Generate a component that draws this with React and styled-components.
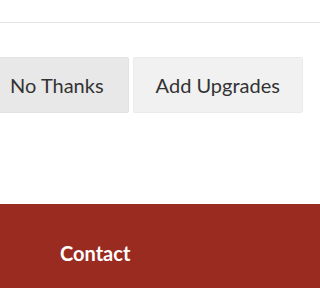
import React from 'react';
import styled, { createGlobalStyle } from 'styled-components';

const GlobalStyle = createGlobalStyle`
  html, body {
    margin: 0;
    padding: 0;
    background: #fff;
    overflow: hidden;
  }
  body {
    font-family: Lato, "Open Sans", sans-serif;
  }
`;

const Page = styled.div`
  width: 100%;
  min-width: 288px;
  height: 100vh;
  min-height: 288px;
  overflow: hidden;
  display: flex;
  flex-direction: column;
`;

const TopRule = styled.div`
  flex: none;
  height: 22px;
  border-bottom: 1px solid #e4e4e4;
`;

const ButtonRow = styled.div`
  width: 288px;
  display: flex;
  justify-content: center;
  gap: 4px;
  margin-top: 34px;
`;

const ActionButton = styled.button`
  flex: none;
  height: 56px;
  padding: 0 ${p => p.$pad}px;
  border: 1px solid ${p => (p.$muted ? '#e2e2e2' : '#ebebeb')};
  border-radius: 2px;
  background: ${p => (p.$muted ? '#e8e8e8' : '#f1f1f1')};
  color: #333;
  font-family: Lato, sans-serif;
  font-size: 20px;
  line-height: 24px;
  white-space: nowrap;
  cursor: pointer;
`;

const Footer = styled.footer`
  margin-top: 91px;
  flex: 1;
  background: #9a2b20;
  padding: 37px 0 0 60px;
  box-sizing: border-box;
`;

const FooterTitle = styled.h3`
  margin: 0;
  color: #fff;
  font-family: Lato, sans-serif;
  font-weight: 700;
  font-size: 20px;
  line-height: 24px;
`;

export default function App() {
  return (
    <>
      <GlobalStyle />
      <Page>
        <TopRule />
        <ButtonRow>
          <ActionButton $muted $pad={24}>No Thanks</ActionButton>
          <ActionButton $pad={22}>Add Upgrades</ActionButton>
        </ButtonRow>
        <Footer>
          <FooterTitle>Contact</FooterTitle>
        </Footer>
      </Page>
    </>
  );
}
